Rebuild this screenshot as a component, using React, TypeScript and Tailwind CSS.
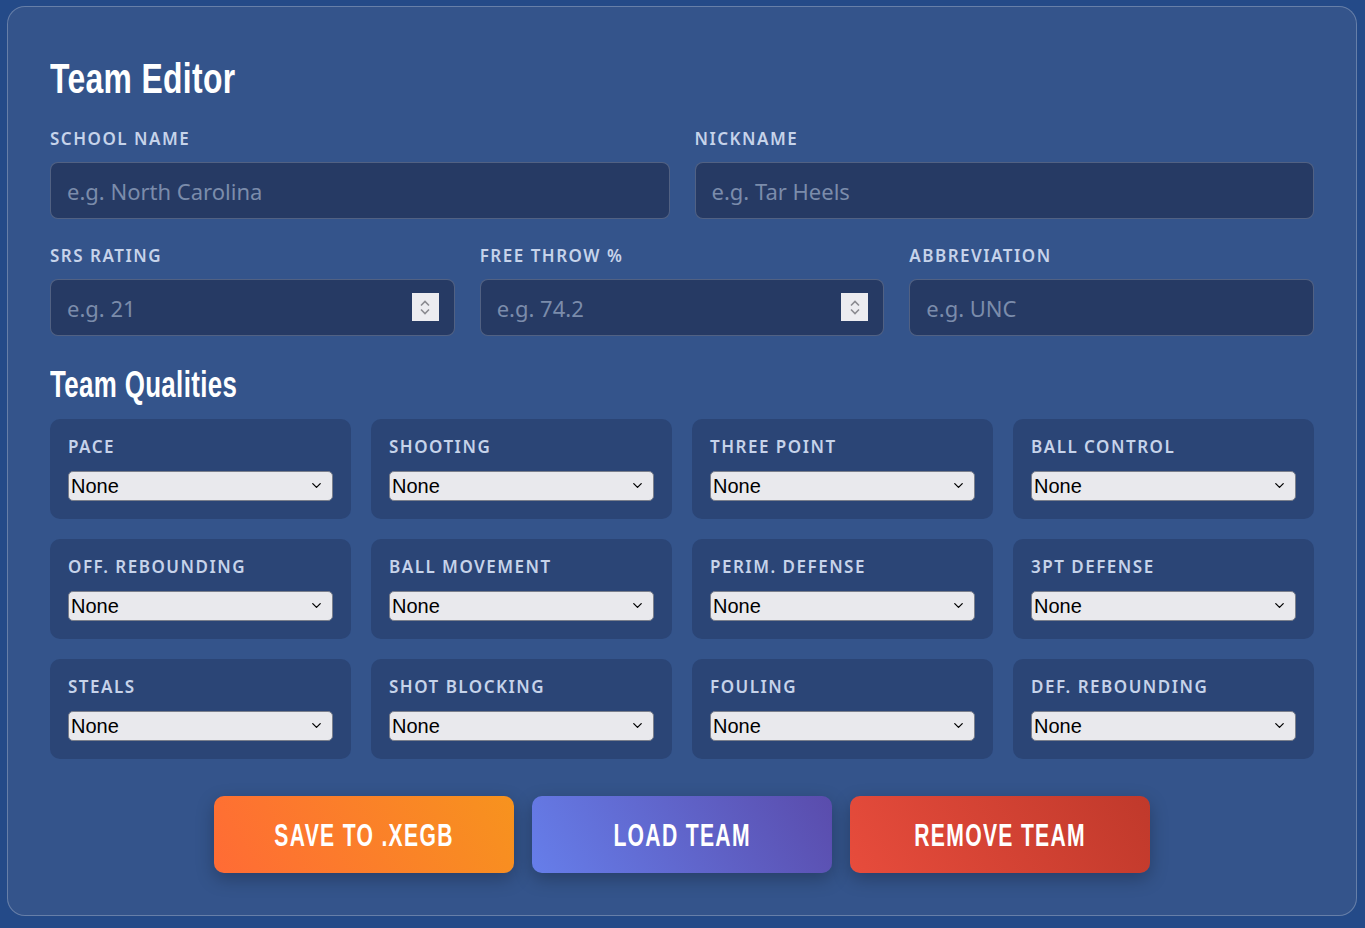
import { ChevronDown } from "lucide-react";

const HEAD = "font-['Liberation_Sans','Arial',sans-serif] font-bold";
const LABEL =
  "font-['Noto_Sans','Open_Sans',sans-serif] text-[17px] leading-[22px] font-semibold tracking-[1.5px] text-[#c6d3ea] uppercase";

const QUALITIES = [
  "Pace",
  "Shooting",
  "Three Point",
  "Ball Control",
  "Off. Rebounding",
  "Ball Movement",
  "Perim. Defense",
  "3PT Defense",
  "Steals",
  "Shot Blocking",
  "Fouling",
  "Def. Rebounding",
];

function Field({ label, placeholder, spinner }: { label: string; placeholder: string; spinner?: boolean }) {
  return (
    <div className="flex flex-col">
      <label className={LABEL + " mb-[12px]"}>{label}</label>
      <div className="relative">
        <input
          type="text"
          placeholder={placeholder}
          className="w-full h-[57px] rounded-[8px] border border-white/20 bg-[#263a64] px-4 text-[22px] text-white placeholder:text-[#7b8cab] outline-none font-['Noto_Sans',sans-serif]"
        />
        {spinner && (
          <div className="absolute right-[16px] top-[14px] w-[27px] h-[28px] bg-[#ececf0] flex flex-col items-center justify-center gap-[1px]">
            <svg width="12" height="8" viewBox="0 0 12 8" fill="none" stroke="#8a8a90" strokeWidth="1.6">
              <path d="M2 6.5 6 2.5 10 6.5" />
            </svg>
            <svg width="12" height="8" viewBox="0 0 12 8" fill="none" stroke="#8a8a90" strokeWidth="1.6">
              <path d="M2 1.5 6 5.5 10 1.5" />
            </svg>
          </div>
        )}
      </div>
    </div>
  );
}

function Quality({ label }: { label: string }) {
  return (
    <div className="rounded-[10px] bg-[#2b4576] px-[18px] pt-[17px] pb-[18px]">
      <div className={LABEL + " mb-[13px]"}>{label}</div>
      <div className="relative">
        <select className="w-full h-[30px] appearance-none rounded-[5px] border border-[#7a7f8c] bg-[#e9e9ed] pl-[2px] text-[20px] leading-none text-black font-['Liberation_Sans',sans-serif] outline-none">
          <option>None</option>
        </select>
        <ChevronDown className="pointer-events-none absolute right-[9px] top-[7px] h-[15px] w-[15px] text-black" strokeWidth={2} />
      </div>
    </div>
  );
}

function ActionButton({ label, bg }: { label: string; bg: string }) {
  return (
    <button
      className={
        HEAD +
        " w-[300px] h-[77px] rounded-[10px] text-white text-[32px] uppercase shadow-[0_6px_18px_rgba(0,0,0,0.25)] flex items-center justify-center " +
        bg
      }
    >
      <span className="inline-block scale-x-[0.66] whitespace-nowrap tracking-[2px]">{label}</span>
    </button>
  );
}

export default function App() {
  return (
    <div className="min-h-screen bg-[#244a88] pl-[7px] pr-[8px] pt-[6px] pb-[12px]">
      <div className="rounded-[18px] border border-white/25 bg-[#34548b] px-[42px] pt-[43px] pb-[42px]">
        <h1 className={HEAD + " text-[43px] leading-[56px] text-white"}>
          <span className="inline-block origin-left scale-x-[0.74] whitespace-nowrap tracking-[0.5px]">Team Editor</span>
        </h1>

        <div className="mt-[22px] grid grid-cols-2 gap-[25px]">
          <Field label="School Name" placeholder="e.g. North Carolina" />
          <Field label="Nickname" placeholder="e.g. Tar Heels" />
        </div>

        <div className="mt-[26px] grid grid-cols-3 gap-[25px]">
          <Field label="SRS Rating" placeholder="e.g. 21" spinner />
          <Field label="Free Throw %" placeholder="e.g. 74.2" spinner />
          <Field label="Abbreviation" placeholder="e.g. UNC" />
        </div>

        <h2 className={HEAD + " mt-[25px] text-[37px] leading-[48px] text-white"}>
          <span className="inline-block origin-left scale-x-[0.7] whitespace-nowrap tracking-[0.5px]">Team Qualities</span>
        </h2>

        <div className="mt-[10px] grid grid-cols-4 gap-x-[20px] gap-y-[20px]">
          {QUALITIES.map((q) => (
            <Quality key={q} label={q} />
          ))}
        </div>

        <div className="mt-[37px] flex justify-center gap-[18px]">
          <ActionButton label="Save to .xegb" bg="bg-[linear-gradient(60deg,#ff6b35,#f7931e)]" />
          <ActionButton label="Load Team" bg="bg-[linear-gradient(60deg,#667eea,#5a4cac)]" />
          <ActionButton label="Remove Team" bg="bg-[linear-gradient(60deg,#e74c3c,#c0392b)]" />
        </div>
      </div>
    </div>
  );
}
